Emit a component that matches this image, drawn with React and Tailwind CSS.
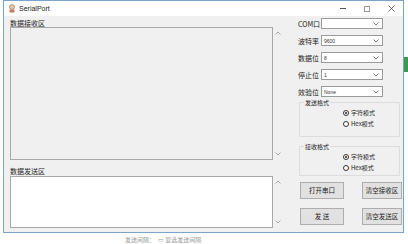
import React from "react";

const FONT = { fontFamily: '"Noto Sans CJK SC", "Noto Sans", sans-serif' };

function Chevron({ up }) {
  return (
    <svg width="6" height="4" viewBox="0 0 6 4" className="block">
      <path d={up ? "M0.5 3.5 L3 1 L5.5 3.5" : "M0.5 0.5 L3 3 L5.5 0.5"} fill="none" stroke="#a0a0a0" strokeWidth="0.9" />
    </svg>
  );
}

function Combo({ label, value }) {
  return (
    <div className="flex items-center h-[17px]">
      <div className="w-[23px] text-[7px] leading-[8px] text-[#222]">{label}</div>
      <div className="w-[62px] h-[11px] bg-white border border-[#9a9a9a] flex items-center pl-[2px] pr-[3px]">
        <span className="flex-1 text-[5px] leading-[6px] text-[#333]" style={{ fontFamily: '"Liberation Sans", sans-serif' }}>{value}</span>
        <svg width="6" height="4" viewBox="0 0 6 4"><path d="M0.5 0.5 L3 3 L5.5 0.5" fill="none" stroke="#606060" strokeWidth="0.8" /></svg>
      </div>
    </div>
  );
}

function Radio({ checked, label }) {
  return (
    <div className="flex items-center h-[11px] pl-[43px]">
      <div className="w-[6px] h-[6px] rounded-full border border-[#333] bg-white flex items-center justify-center">
        {checked && <div className="w-[2px] h-[2px] rounded-full bg-[#222]" />}
      </div>
      <span className="ml-[2px] text-[6px] leading-[7px] text-[#222]">{label}</span>
    </div>
  );
}

function Group({ title, className }) {
  return (
    <div className={"relative w-[101px] border border-[#dcdcdc] rounded-[1px] " + className}>
      <div className="absolute left-[4px] top-[-4px] bg-[#f0f0f0] px-[1px] text-[6px] leading-[7px] text-[#222]">{title}</div>
      <div className="pt-[4px]">
        <Radio checked label="字符模式" />
        <Radio label="Hex模式" />
      </div>
    </div>
  );
}

function Btn({ children }) {
  return (
    <div className="h-[17px] bg-[#e1e1e1] border border-[#adadad] flex items-center justify-center text-[6.5px] leading-[7px] text-[#222]">
      {children}
    </div>
  );
}

export default function App() {
  return (
    <div className="relative w-[408px] h-[244px] bg-white overflow-hidden" style={FONT}>
      <div className="absolute left-[125px] top-[236px] text-[6px] leading-[7px] text-[#999] whitespace-nowrap">发送间隔：　▭ 复选发送间隔</div>
      <div className="absolute left-[404px] top-[57px] w-[4px] h-[15px] bg-[#3c9a4c]" />
      <div className="ml-[3px] w-[401px] h-[233px] border border-[#7ba3cf] bg-[#f0f0f0] flex flex-col">
        {/* Title bar */}
        <div className="h-[15px] bg-white flex items-center shrink-0">
          <svg width="8" height="9" viewBox="0 0 8 9" className="ml-[4px]">
            <circle cx="4" cy="3" r="2.5" fill="#e8c9a8" stroke="#8a6a50" strokeWidth="0.6" />
            <rect x="1.5" y="5.5" width="5" height="3" fill="#c08060" />
          </svg>
          <span className="ml-[3px] text-[7px] leading-[8px] text-[#222]" style={{ fontFamily: '"Liberation Sans", sans-serif' }}>SerialPort</span>
          <div className="flex-1" />
          <div className="w-[24px] flex justify-center"><div className="w-[6px] h-[1px] bg-[#555]" /></div>
          <div className="w-[24px] flex justify-center"><div className="w-[6px] h-[6px] border border-[#999]" /></div>
          <div className="w-[24px] flex justify-center">
            <svg width="7" height="7" viewBox="0 0 7 7"><path d="M0.5 0.5 L6.5 6.5 M6.5 0.5 L0.5 6.5" stroke="#444" strokeWidth="0.8" /></svg>
          </div>
        </div>
        {/* Client */}
        <div className="flex flex-1">
          <div className="ml-[6px] w-[273px] flex flex-col pt-[3px]">
            <div className="h-[8px] text-[7px] leading-[8px] text-[#222]">数据接收区</div>
            <div className="flex h-[133px]">
              <div className="flex-1 border border-[#a8a8a8] bg-[#f0f0f0]" />
              <div className="w-[10px] flex flex-col items-center justify-between py-[4px]">
                <Chevron up />
                <Chevron />
              </div>
            </div>
            <div className="h-[16px] flex items-end pb-[1px] text-[7px] leading-[8px] text-[#222]">数据发送区</div>
            <div className="flex h-[52px]">
              <div className="flex-1 border border-[#a8a8a8] bg-white" />
              <div className="w-[10px] flex flex-col items-center justify-between py-[4px]">
                <Chevron up />
                <Chevron />
              </div>
            </div>
          </div>
          <div className="ml-[15px] flex flex-col -mt-[1px]">
            <Combo label="COM口" value="" />
            <Combo label="波特率" value="9600" />
            <Combo label="数据位" value="8" />
            <Combo label="停止位" value="1" />
            <Combo label="效验位" value="None" />
            <Group title="发送格式" className="mt-[2px] h-[35px] ml-[1px]" />
            <Group title="接收格式" className="mt-[9px] h-[30px] ml-[1px]" />
            <div className="grid grid-cols-[44px_40px] gap-x-[18px] gap-y-[9px] mt-[6px] ml-[2px]">
              <Btn>打开串口</Btn>
              <Btn>清空接收区</Btn>
              <Btn>发 送</Btn>
              <Btn>清空发送区</Btn>
            </div>
          </div>
        </div>
      </div>
    </div>
  );
}
